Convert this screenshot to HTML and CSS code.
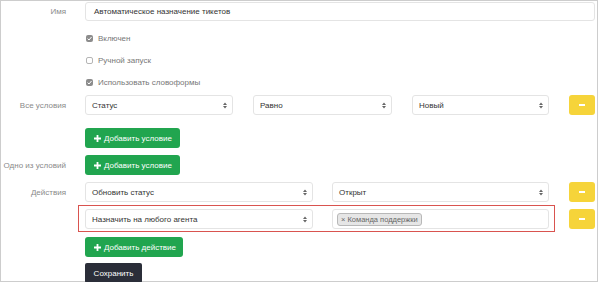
FILE: index.html
```html
<!DOCTYPE html>
<html lang="ru">
<head>
  <meta charset="UTF-8" />
  <meta name="viewport" content="width=device-width, initial-scale=1" />
  <title>Автоматическое назначение тикетов</title>
  <link rel="stylesheet" href="styles.css">
</head>
<body>
  <div class="panel">
    <div class="row">
      <div class="label">Имя</div>
      <div class="control name-input">Автоматическое назначение тикетов</div>
    </div>

    <div class="checks">
      <div class="row check-row">
        <div class="label"></div>
        <span class="check checked"><svg width="7" height="7" viewBox="0 0 7 7"><path d="M1.6 3.6L3 5L5.5 2" fill="none" stroke="#fff" stroke-width="1"/></svg></span>
        <span class="check-text">Включен</span>
      </div>
      <div class="row check-row">
        <div class="label"></div>
        <span class="check"></span>
        <span class="check-text">Ручной запуск</span>
      </div>
      <div class="row check-row">
        <div class="label"></div>
        <span class="check checked"><svg width="7" height="7" viewBox="0 0 7 7"><path d="M1.6 3.6L3 5L5.5 2" fill="none" stroke="#fff" stroke-width="1"/></svg></span>
        <span class="check-text">Использовать словоформы</span>
      </div>
    </div>

    <div class="row cond-row">
      <div class="label">Все условия</div>
      <div class="control select w-148"><span>Статус</span><svg width="4" height="7" viewBox="0 0 4 7"><path d="M0 3L2 0.5L4 3ZM0 4L2 6.5L4 4Z" fill="#666"/></svg></div>
      <div class="control select w-139 gap"><span>Равно</span><svg width="4" height="7" viewBox="0 0 4 7"><path d="M0 3L2 0.5L4 3ZM0 4L2 6.5L4 4Z" fill="#666"/></svg></div>
      <div class="control select w-137 gap"><span>Новый</span><svg width="4" height="7" viewBox="0 0 4 7"><path d="M0 3L2 0.5L4 3ZM0 4L2 6.5L4 4Z" fill="#666"/></svg></div>
      <button class="btn-remove"><span class="minus"></span></button>
    </div>

    <div class="row add-row">
      <div class="label"></div>
      <button class="btn-add w-95"><svg width="7" height="7" viewBox="0 0 7 7"><path d="M3.5 0V7M0 3.5H7" stroke="#fff" stroke-width="1.8"/></svg>Добавить условие</button>
    </div>

    <div class="row add-row2">
      <div class="label">Одно из условий</div>
      <button class="btn-add w-95"><svg width="7" height="7" viewBox="0 0 7 7"><path d="M3.5 0V7M0 3.5H7" stroke="#fff" stroke-width="1.8"/></svg>Добавить условие</button>
    </div>

    <div class="row action-row">
      <div class="label">Действия</div>
      <div class="control select w-228"><span>Обновить статус</span><svg width="4" height="7" viewBox="0 0 4 7"><path d="M0 3L2 0.5L4 3ZM0 4L2 6.5L4 4Z" fill="#666"/></svg></div>
      <div class="control select w-217 gap-19"><span>Открыт</span><svg width="4" height="7" viewBox="0 0 4 7"><path d="M0 3L2 0.5L4 3ZM0 4L2 6.5L4 4Z" fill="#666"/></svg></div>
      <button class="btn-remove"><span class="minus"></span></button>
    </div>

    <div class="row marked-row">
      <div class="label"></div>
      <div class="marked">
        <div class="control select w-228"><span>Назначить на любого агента</span><svg width="4" height="7" viewBox="0 0 4 7"><path d="M0 3L2 0.5L4 3ZM0 4L2 6.5L4 4Z" fill="#666"/></svg></div>
        <div class="control tags w-217 gap-19"><span class="tag">× Команда поддержки</span></div>
      </div>
      <button class="btn-remove after-marked"><span class="minus"></span></button>
    </div>

    <div class="row add-row3">
      <div class="label"></div>
      <button class="btn-add w-98"><svg width="7" height="7" viewBox="0 0 7 7"><path d="M3.5 0V7M0 3.5H7" stroke="#fff" stroke-width="1.8"/></svg>Добавить действие</button>
    </div>

    <div class="row save-row">
      <div class="label"></div>
      <button class="btn-save">Сохранить</button>
    </div>
  </div>
</body>
</html>
```

FILE: styles.css
```css
* {
  box-sizing: border-box;
}

body {
  margin: 0;
  background: #fff;
  color: #333;
  font-family: 'Liberation Sans', Arial, sans-serif;
  font-size: 8px;
}

.panel {
  width: 598px;
  height: 282px;
  border: 1px solid #cdcdcd;
  padding: 1px 2px 0 0;
}

.row {
  display: flex;
  align-items: center;
}

.label {
  width: 84px;
  flex-shrink: 0;
  padding-right: 19px;
  text-align: right;
  color: #8a8a8a;
  white-space: nowrap;
}

.control {
  height: 20px;
  border: 1px solid #e4e4e4;
  border-radius: 3px;
  display: flex;
  align-items: center;
  padding: 0 5px 0 6px;
  background: #fff;
  white-space: nowrap;
  flex-shrink: 0;
}

.name-input {
  flex: 1;
  height: 19px;
  padding-left: 8px;
}

.select {
  justify-content: space-between;
}

.w-148 { width: 148px; }
.w-139 { width: 139px; }
.w-137 { width: 137px; }
.w-228 { width: 228px; }
.w-217 { width: 217px; }
.w-95 { width: 95px; }
.w-98 { width: 98px; }

.gap { margin-left: 20px; }
.gap-19 { margin-left: 19px; }

/* checkboxes */
.checks {
  padding-top: 6px;
}

.check-row {
  height: 22px;
}

.check {
  width: 7px;
  height: 7px;
  margin-left: 1px;
  border: 1px solid #b5b5b5;
  border-radius: 2px;
  background: #fff;
  display: flex;
}

.check.checked {
  border: none;
  background: #8c8c8c;
}

.check-text {
  margin-left: 5px;
  color: #777;
}

.cond-row { margin-top: 2px; }
.add-row { margin-top: 13px; }
.add-row2 { margin-top: 7px; }
.action-row { margin-top: 7px; }
.marked-row { margin-top: 3px; }
.add-row3 { margin-top: 5px; }
.save-row { margin-top: 6px; }

/* buttons */
.btn-remove {
  width: 26px;
  height: 20px;
  margin-left: 20px;
  border: none;
  border-radius: 3px;
  background: #f6d43a;
  display: flex;
  align-items: center;
  justify-content: center;
  padding: 0;
}

.btn-remove .minus {
  width: 6px;
  height: 2px;
  background: #fff;
}

.btn-remove.after-marked {
  margin-left: 14px;
}

.btn-add {
  height: 20px;
  border: none;
  border-radius: 3px;
  background: #21a54f;
  color: #fff;
  font-family: inherit;
  font-size: 8px;
  display: flex;
  align-items: center;
  padding: 0 0 0 9px;
  gap: 3px;
  white-space: nowrap;
}

.btn-save {
  height: 20px;
  width: 57px;
  border: none;
  border-radius: 2px;
  background: #2b2e39;
  color: #fff;
  font-family: inherit;
  font-size: 8px;
  padding: 0;
}

/* highlighted action */
.marked {
  display: flex;
  align-items: center;
  margin-left: -7px;
  padding: 3px 5px 2px 6px;
  border: 1px solid #d9534f;
}

.tags {
  padding-left: 4px;
}

.tag {
  height: 13px;
  display: flex;
  align-items: center;
  padding: 0 3px;
  border: 1px solid #b8b8b8;
  border-radius: 3px;
  background: #e6e6e6;
  color: #666;
  font-size: 7.5px;
}
```
